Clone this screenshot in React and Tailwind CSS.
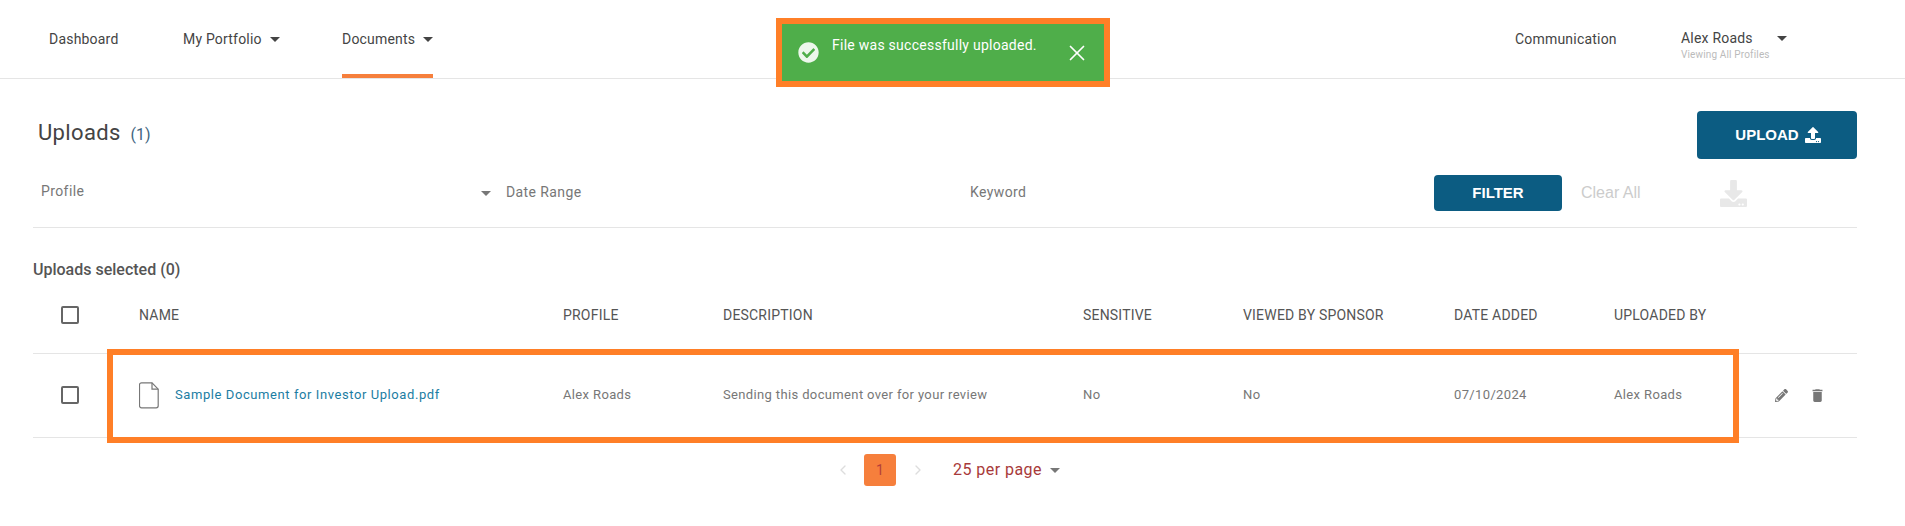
import { ChevronLeft, ChevronRight, X } from "lucide-react";
import { FaCheckCircle, FaDownload, FaPencilAlt, FaUpload } from "react-icons/fa";
import { MdDelete } from "react-icons/md";

/* ─── CONSTANTS ─────────────────────────────────────────────── */
const COLUMNS = "grid grid-cols-[106px_424px_160px_360px_160px_211px_160px_161px_1fr] items-center";
const HEADERS = ["NAME", "PROFILE", "DESCRIPTION", "SENSITIVE", "VIEWED BY SPONSOR", "DATE ADDED", "UPLOADED BY"];
const ARIAL = "font-['Liberation_Sans',sans-serif]";

const Caret = ({ className = "border-t-[#444]" }) => (
  <span className={`inline-block w-0 h-0 border-x-[5px] border-x-transparent border-t-[5px] ${className}`} />
);

const Checkbox = () => (
  <span className="block w-[18px] h-[18px] ml-[28px] border-2 border-[#666] rounded-[2px]" />
);

const FileIcon = () => (
  <svg width="20" height="27" viewBox="0 0 20 27" fill="none" stroke="#777" strokeWidth="1.2">
    <path d="M2.5 .8h10.5l6.2 6.4v16.6a2 2 0 0 1-2 2H2.5a2 2 0 0 1-2-2V2.8a2 2 0 0 1 2-2z" />
    <path d="M13 .8v6.4h6.2" />
  </svg>
);

/* ─── NAV ────────────────────────────────────────────────────── */
const NavBar = () => (
  <nav className="h-[79px] flex items-stretch border-b border-[#e5e5e5] text-[14px] text-[#444] tracking-[0.2px]">
    <span className="ml-[49px] w-[134px] flex items-center">Dashboard</span>
    <span className="w-[159px] flex items-center gap-[8px]">My Portfolio <Caret /></span>
    <span className="w-[91px] flex items-center justify-between border-b-[4px] border-[#f67f3c] pt-[4px]">Documents <Caret /></span>
    <span className="ml-[1082px] w-[166px] flex items-center">Communication</span>
    <div className="w-[106px] pt-[29px]">
      <div className="flex items-center justify-between leading-[18px]">
        <span>Alex Roads</span>
        <Caret />
      </div>
      <div className="text-[10px] leading-[14px] text-[#bbb] mt-[1px] tracking-[0.15px]">Viewing All Profiles</div>
    </div>
  </nav>
);

/* ─── MAIN PAGE ──────────────────────────────────────────────── */
export default function App() {
  return (
    <div className="relative h-[526px] overflow-hidden bg-white font-['Roboto',sans-serif]">
      <NavBar />

      <main className="px-[33px] w-[1890px]">
        {/* Title + upload */}
        <div className="mt-[32px] h-[48px] flex items-center justify-between">
          <h1 className="pl-[5px] pb-[5px] text-[22px] text-[#444] font-normal tracking-[0.35px]">
            Uploads <span className="ml-[4px] text-[16px] text-[#3f6480] tracking-normal">(1)</span>
          </h1>
          <button className={`w-[160px] h-[48px] pl-[2px] flex items-center justify-center gap-[6px] rounded-[4px] bg-[#0c5c82] text-white text-[15px] font-bold ${ARIAL}`}>
            UPLOAD <FaUpload size={16} />
          </button>
        </div>

        {/* Filters */}
        <div className="mt-[16px] pb-[16px] border-b border-[#e5e5e5] grid grid-cols-[473px_464px_464px_147px_139px_1fr] items-center text-[14px] text-[#777]">
          <div className="pl-[8px] pr-[15px] flex items-center justify-between tracking-[0.4px]">
            <span className="-mt-[3px]">Profile</span> <Caret className="border-t-[#777]" />
          </div>
          <span className="tracking-[0.4px] -mt-[2px]">Date Range</span>
          <span className="tracking-[0.4px] -mt-[2px]">Keyword</span>
          <button className={`w-[128px] h-[36px] rounded-[4px] bg-[#0c5c82] text-white text-[15px] font-bold ${ARIAL}`}>
            FILTER
          </button>
          <span className={`text-[16px] text-[#ccc] ${ARIAL}`}>Clear All</span>
          <FaDownload size={27} className="text-[#e8e8e8]" />
        </div>

        {/* Table */}
        <div className="pt-[33px] h-[51px] text-[16px] leading-[18px] font-medium text-[#555]">
          Uploads selected (0)
        </div>
        <div className={`${COLUMNS} h-[75px] pb-[2px] border-b border-[#e5e5e5] text-[14px] text-[#555] tracking-[0.2px]`}>
          <Checkbox />
          {HEADERS.map((h) => <span key={h}>{h}</span>)}
        </div>
        <div className={`${COLUMNS} h-[84px] pb-[1px] border-b border-[#e5e5e5] text-[13px] text-[#777] tracking-[0.36px]`}>
          <Checkbox />
          <div className="flex items-center gap-[16px]">
            <FileIcon />
            <a className="text-[#1b7da3] tracking-[0.58px]">Sample Document for Investor Upload.pdf</a>
          </div>
          <span>Alex Roads</span>
          <span>Sending this document over for your review</span>
          <span>No</span>
          <span>No</span>
          <span>07/10/2024</span>
          <span>Alex Roads</span>
          <div className="flex items-center gap-[23px]">
            <FaPencilAlt size={13} className="text-[#777]" />
            <MdDelete size={17} className="text-[#777] -ml-[2px]" />
          </div>
        </div>

        {/* Pagination */}
        <div className="mt-[16px] h-[32px] pl-[802px] flex items-center">
          <ChevronLeft size={16} className="text-[#ddd]" />
          <span className="ml-[13px] w-[32px] h-[32px] flex items-center justify-center rounded-[3px] bg-[#f67f3c] text-[14px] text-[#b5403a]">1</span>
          <ChevronRight size={16} className="ml-[14px] text-[#ddd]" />
          <span className="ml-[27px] mr-[8px] text-[16px] text-[#a83a3a] tracking-[0.45px]">25 per page</span>
          <Caret className="border-t-[#777]" />
        </div>
      </main>

      {/* Toast */}
      <div className="absolute left-[776px] top-[18px] w-[334px] h-[69px] border-[6px] border-[#ff7f27] bg-[#4fae4a] text-white">
        <FaCheckCircle size={21} className="absolute left-[16px] top-[18px] text-[#edf7ec]" />
        <span className="absolute left-[50px] top-[11px] text-[14px] leading-[20px] tracking-[0.26px]">File was successfully uploaded.</span>
        <X size={26} strokeWidth={1.6} className="absolute left-[282px] top-[16px]" />
      </div>

      {/* Row highlight */}
      <div className="absolute left-[107px] top-[349px] w-[1632px] h-[94px] border-[6px] border-[#ff7f27]" />
    </div>
  );
}
